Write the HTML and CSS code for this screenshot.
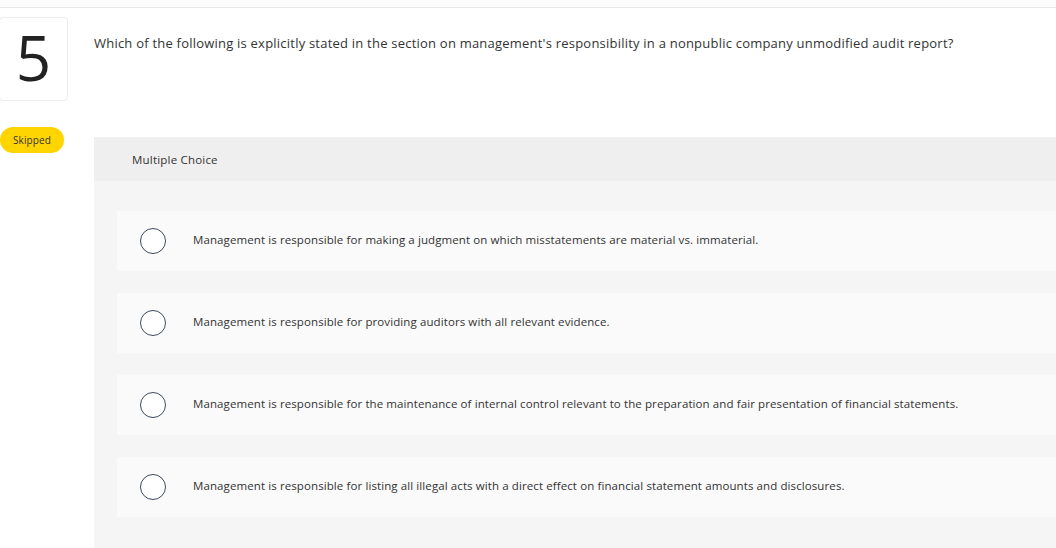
FILE: index.html
```html
<!DOCTYPE html>
<html lang="en">
<head>
<meta charset="utf-8">
<title>Question 5</title>
<link rel="stylesheet" href="styles.css">
</head>
<body>
<div class="topbar"></div>
<div class="page">
  <aside class="side">
    <div class="qnum">5</div>
    <span class="pill">Skipped</span>
  </aside>
  <main class="content">
    <p class="question">Which of the following is explicitly stated in the section on management's responsibility in a nonpublic company unmodified audit report?</p>
    <section class="panel">
      <div class="panel-head">Multiple Choice</div>
      <ul class="options">
        <li class="option"><span class="radio"></span><span class="otext">Management is responsible for making a judgment on which misstatements are material vs. immaterial.</span></li>
        <li class="option"><span class="radio"></span><span class="otext">Management is responsible for providing auditors with all relevant evidence.</span></li>
        <li class="option"><span class="radio"></span><span class="otext">Management is responsible for the maintenance of internal control relevant to the preparation and fair presentation of financial statements.</span></li>
        <li class="option"><span class="radio"></span><span class="otext">Management is responsible for listing all illegal acts with a direct effect on financial statement amounts and disclosures.</span></li>
      </ul>
    </section>
  </main>
</div>
</body>
</html>
```

FILE: styles.css
```css
* { box-sizing: border-box; }
html, body { margin: 0; padding: 0; background: #fff; }
body {
  font-family: "Open Sans", "Liberation Sans", sans-serif;
  color: #333;
  width: 1056px;
  height: 548px;
  overflow: hidden;
}
.topbar {
  height: 8px;
  background: #fcfcfc;
  border-bottom: 1px solid #e8e8e8;
}
.page {
  display: flex;
  align-items: flex-start;
}
.side {
  width: 94px;
  flex: none;
  display: flex;
  flex-direction: column;
  align-items: flex-start;
  padding-top: 9px;
}
.qnum {
  width: 69px;
  height: 84px;
  margin-left: -1px;
  border: 1px solid #ececec;
  border-radius: 4px;
  display: flex;
  align-items: center;
  justify-content: center;
  font-size: 62px;
  font-weight: 400;
  color: #222;
  line-height: 1;
  padding-bottom: 4px;
}
.pill {
  margin-top: 26px;
  width: 64px;
  height: 26px;
  border-radius: 13px;
  background: #ffd500;
  font-size: 10px;
  letter-spacing: 0.1px;
  color: #333;
  display: flex;
  align-items: center;
  justify-content: center;
}
.content {
  flex: 1;
  min-width: 0;
}
.question {
  margin: 25px 0 0 0;
  font-size: 13px;
  letter-spacing: 0.22px;
  line-height: 20px;
  color: #333;
  height: 104px;
}
.panel {
  background: #f5f5f5;
  height: 420px;
}
.panel-head {
  height: 44px;
  background: #efefef;
  padding-left: 38px;
  display: flex;
  align-items: center;
  font-size: 11.5px;
  letter-spacing: 0.2px;
  color: #333;
}
.options {
  list-style: none;
  margin: 0;
  padding: 30px 0 0 23px;
  display: flex;
  flex-direction: column;
  gap: 22px;
}
.option {
  height: 60px;
  background: #fafafa;
  display: flex;
  align-items: center;
  padding-left: 23px;
}
.radio {
  width: 26px;
  height: 26px;
  border: 1.4px solid #3b4a5e;
  border-radius: 50%;
  background: #fff;
  flex: none;
}
.otext {
  margin-left: 27px;
  font-size: 11.5px;
  letter-spacing: 0.1px;
  line-height: 16px;
  padding-bottom: 2px;
  color: #333;
}
```
